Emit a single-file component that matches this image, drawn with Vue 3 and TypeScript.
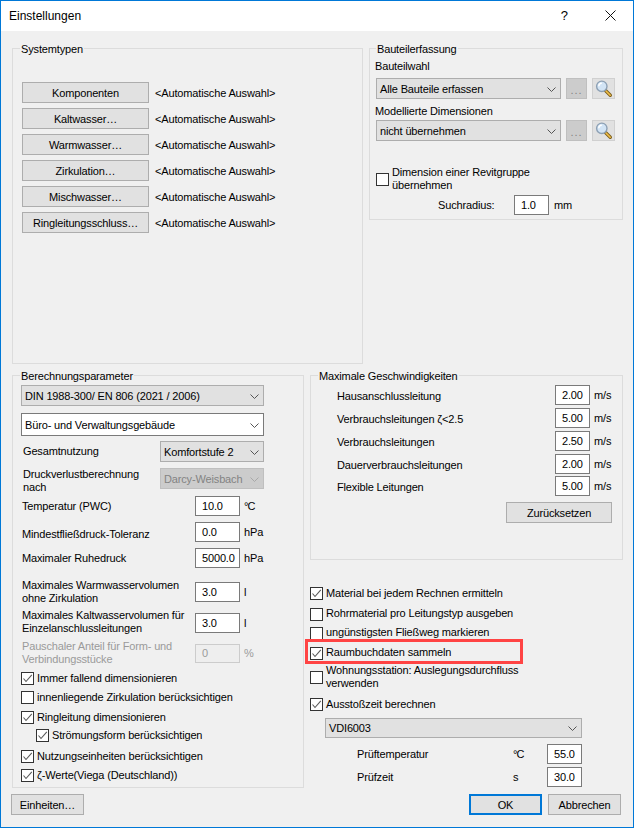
<script setup lang="ts">
const systemTypes: string[] = ['Komponenten', 'Kaltwasser…', 'Warmwasser…', 'Zirkulation…', 'Mischwasser…', 'Ringleitungsschluss…']
const speeds = [
  { label: 'Hausanschlussleitung', value: '2.00', cls: '' },
  { label: 'Verbrauchsleitungen ζ<2.5', value: '5.00', cls: 'mt3' },
  { label: 'Verbrauchsleitungen', value: '2.50', cls: 'mt3' },
  { label: 'Dauerverbrauchsleitungen', value: '2.00', cls: 'mt3' },
  { label: 'Flexible Leitungen', value: '5.00', cls: 'mt2' },
]
const leftChecks = [
  { label: 'Immer fallend dimensionieren', on: true, cls: 'c9' },
  { label: 'innenliegende Zirkulation berücksichtigen', on: false, cls: 'c6' },
  { label: 'Ringleitung dimensionieren', on: true, cls: 'c7' },
  { label: 'Strömungsform berücksichtigen', on: true, cls: 'c5 nested' },
  { label: 'Nutzungseinheiten berücksichtigen', on: true, cls: 'c8' },
  { label: 'ζ-Werte(Viega (Deutschland))', on: true, cls: 'c6' },
]
</script>

<template>
  <div class="window">
    <header class="titlebar">
      <span class="title">Einstellungen</span>
      <span class="help">?</span>
      <svg class="close" width="11" height="11" viewBox="0 0 11 11"><path d="M0.5 0.5L10.5 10.5M10.5 0.5L0.5 10.5" stroke="#111" stroke-width="1" fill="none" /></svg>
    </header>

    <main class="body">
      <section class="row-top">
        <div class="group sys">
          <span class="legend">Systemtypen</span>
          <div v-for="t in systemTypes" :key="t" class="sys-row">
            <div class="btn sys-btn">{{ t }}</div>
            <span class="nudge">&lt;Automatische Auswahl&gt;</span>
          </div>
        </div>

        <div class="group capture">
          <span class="legend left6">Bauteilerfassung</span>
          <div class="lbl first">Bauteilwahl</div>
          <div class="pick-row">
            <div class="combo pick-combo"><span>Alle Bauteile erfassen</span><svg class="chev" width="9" height="5" viewBox="0 0 9 5"><path d="M0.5 0.5L4.5 4.5L8.5 0.5" fill="none" stroke="#555" /></svg></div>
            <div class="dots">...</div>
            <div class="search">
              <svg width="19" height="19" viewBox="0 0 19 19"><path d="M11 11L16.3 16.3" stroke="#7d5f1c" stroke-width="3.4" stroke-linecap="round" /><path d="M12 12L16.2 16.2" stroke="#f2c04a" stroke-width="1.6" stroke-linecap="round" /><circle cx="7.8" cy="7.3" r="5.2" fill="#d2e4f5" stroke="#8da0b4" stroke-width="1.4" /><path d="M4.8 7.3a3 3 0 0 1 3-3" fill="none" stroke="#fff" stroke-width="1.4" /></svg>
            </div>
          </div>
          <div class="lbl second">Modellierte Dimensionen</div>
          <div class="pick-row tight">
            <div class="combo pick-combo"><span>nicht übernehmen</span><svg class="chev" width="9" height="5" viewBox="0 0 9 5"><path d="M0.5 0.5L4.5 4.5L8.5 0.5" fill="none" stroke="#555" /></svg></div>
            <div class="dots">...</div>
            <div class="search">
              <svg width="19" height="19" viewBox="0 0 19 19"><path d="M11 11L16.3 16.3" stroke="#7d5f1c" stroke-width="3.4" stroke-linecap="round" /><path d="M12 12L16.2 16.2" stroke="#f2c04a" stroke-width="1.6" stroke-linecap="round" /><circle cx="7.8" cy="7.3" r="5.2" fill="#d2e4f5" stroke="#8da0b4" stroke-width="1.4" /><path d="M4.8 7.3a3 3 0 0 1 3-3" fill="none" stroke="#fff" stroke-width="1.4" /></svg>
            </div>
          </div>
          <label class="check revit">
            <span class="box"></span>
            <span class="ml">Dimension einer Revitgruppe<br />übernehmen</span>
          </label>
          <div class="radius-row">
            <span class="radius-label">Suchradius:</span>
            <div class="input w35">1.0</div>
            <span class="radius-unit">mm</span>
          </div>
        </div>
      </section>

      <section class="row-bottom">
        <div class="group calc">
          <span class="legend">Berechnungsparameter</span>
          <div class="combo full"><span>DIN 1988-300/ EN 806 (2021 / 2006)</span><svg class="chev" width="9" height="5" viewBox="0 0 9 5"><path d="M0.5 0.5L4.5 4.5L8.5 0.5" fill="none" stroke="#555" /></svg></div>
          <div class="combo full white"><span>Büro- und Verwaltungsgebäude</span><svg class="chev" width="9" height="5" viewBox="0 0 9 5"><path d="M0.5 0.5L4.5 4.5L8.5 0.5" fill="none" stroke="#555" /></svg></div>
          <div class="sel-row s5">
            <span class="sel-label centered">Gesamtnutzung</span>
            <div class="combo small"><span>Komfortstufe 2</span><svg class="chev" width="9" height="5" viewBox="0 0 9 5"><path d="M0.5 0.5L4.5 4.5L8.5 0.5" fill="none" stroke="#555" /></svg></div>
          </div>
          <div class="sel-row s6">
            <span class="sel-label">Druckverlustberechnung<br />nach</span>
            <div class="combo small disabled"><span>Darcy-Weisbach</span><svg class="chev" width="9" height="5" viewBox="0 0 9 5"><path d="M0.5 0.5L4.5 4.5L8.5 0.5" fill="none" stroke="#a8a8a8" /></svg></div>
          </div>
          <div class="param p7"><span class="plabel">Temperatur (PWC)</span><div class="input w45">10.0</div><span class="unit deg">°C</span></div>
          <div class="param p6"><span class="plabel down2">Mindestfließdruck-Toleranz</span><div class="input w45">0.0</div><span class="unit">hPa</span></div>
          <div class="param p6"><span class="plabel">Maximaler Ruhedruck</span><div class="input w45">5000.0</div><span class="unit">hPa</span></div>
          <div class="param p14"><span class="plabel">Maximales Warmwasservolumen<br />ohne Zirkulation</span><div class="input w45">3.0</div><span class="unit">l</span></div>
          <div class="param p11"><span class="plabel up1">Maximales Kaltwasservolumen für<br />Einzelanschlussleitungen</span><div class="input w45">3.0</div><span class="unit">l</span></div>
          <div class="param p11 muted"><span class="plabel up1">Pauschaler Anteil für Form- und<br />Verbindungsstücke</span><div class="input w45 off">0</div><span class="unit">%</span></div>
          <label v-for="c in leftChecks" :key="c.label" class="check" :class="c.cls">
            <span class="box"><svg v-if="c.on" width="11" height="11" viewBox="0 0 11 11"><path d="M1.5 5.5L4 8.5L9.8 1.8" fill="none" stroke="#5a5a5a" stroke-width="1.1" /></svg></span>
            <span>{{ c.label }}</span>
          </label>
        </div>

        <div class="right-col">
          <div class="group speed">
            <span class="legend">Maximale Geschwindigkeiten</span>
            <div v-for="s in speeds" :key="s.label" class="speed-row" :class="s.cls">
              <span class="speed-label"><span class="nudge">{{ s.label }}</span></span>
              <div class="input w35">{{ s.value }}</div>
              <span class="speed-unit">m/s</span>
            </div>
            <div class="btn reset">Zurücksetzen</div>
          </div>

          <label class="check c27"><span class="box"><svg width="11" height="11" viewBox="0 0 11 11"><path d="M1.5 5.5L4 8.5L9.8 1.8" fill="none" stroke="#5a5a5a" stroke-width="1.1" /></svg></span><span>Material bei jedem Rechnen ermitteln</span></label>
          <label class="check c8"><span class="box"></span><span class="lift">Rohrmaterial pro Leitungstyp ausgeben</span></label>
          <label class="check c6"><span class="box"></span><span class="lift">ungünstigsten Fließweg markieren</span></label>
          <label class="check c7 marked"><span class="box"><svg width="11" height="11" viewBox="0 0 11 11"><path d="M1.5 5.5L4 8.5L9.8 1.8" fill="none" stroke="#5a5a5a" stroke-width="1.1" /></svg></span><span class="lift">Raumbuchdaten sammeln</span><span class="highlight"></span></label>
          <label class="check c4"><span class="box"></span><span class="ml">Wohnungsstation: Auslegungsdurchfluss<br />verwenden</span></label>
          <label class="check c8"><span class="box"><svg width="11" height="11" viewBox="0 0 11 11"><path d="M1.5 5.5L4 8.5L9.8 1.8" fill="none" stroke="#5a5a5a" stroke-width="1.1" /></svg></span><span>Ausstoßzeit berechnen</span></label>
          <div class="combo vdi"><span>VDI6003</span><svg class="chev" width="9" height="5" viewBox="0 0 9 5"><path d="M0.5 0.5L4.5 4.5L8.5 0.5" fill="none" stroke="#555" /></svg></div>
          <div class="test-row t6"><span class="test-label">Prüftemperatur</span><span class="test-unit deg">°C</span><div class="input w35">55.0</div></div>
          <div class="test-row t3"><span class="test-label">Prüfzeit</span><span class="test-unit">s</span><div class="input w35">30.0</div></div>
        </div>
      </section>

      <footer class="footer">
        <div class="btn foot-btn">Einheiten…</div>
        <div class="actions">
          <div class="btn foot-btn primary">OK</div>
          <div class="btn foot-btn">Abbrechen</div>
        </div>
      </footer>
    </main>
  </div>
</template>

<style>
html, body { margin: 0; background: #f0f0f0; }
</style>

<style scoped>
.window { width: 634px; height: 828px; box-sizing: border-box; border: 1px solid #0078d7; background: #f0f0f0; color: #000; font: 11px/13px "Liberation Sans", Arial, sans-serif; letter-spacing: -0.15px; overflow: hidden; }
.titlebar { height: 30px; background: #fff; display: flex; align-items: center; position: relative; letter-spacing: 0; }
.title { margin-left: 8px; font-size: 12px; }
.help { margin-left: auto; font-size: 13px; margin-right: 37px; margin-top: -2px; }
.close { margin-right: 17px; margin-top: -2px; }
.body { padding: 0 10px; }
.row-top { display: flex; gap: 6px; align-items: flex-start; margin-top: 17px; margin-left: 1px; }
.row-bottom { display: flex; gap: 6px; align-items: flex-start; margin-top: 11px; margin-left: 1px; }
.group { border: 1px solid #dcdcdc; box-sizing: border-box; position: relative; }
.legend { position: absolute; top: -6px; left: 7px; background: #f0f0f0; padding: 0 1px; white-space: nowrap; }
.left6 { left: 6px; }
.nudge { position: relative; top: 1px; }
.lift { position: relative; top: -1px; }

.sys { width: 351px; height: 316px; padding: 33px 0 0 9px; display: flex; flex-direction: column; gap: 5px; }
.sys-row { display: flex; align-items: center; gap: 6px; height: 21px; }
.btn { background: #e1e1e1; border: 1px solid #adadad; box-sizing: border-box; display: flex; align-items: center; justify-content: center; height: 21px; padding-top: 1px; }
.sys-btn { width: 127px; }

.capture { width: 254px; height: 172px; padding-left: 5px; }
.lbl.first { margin-top: 11px; }
.lbl.second { margin-top: 6px; }
.pick-row { display: flex; margin: 5px 0 0 1px; gap: 5px; }
.pick-row.tight { margin-top: 2px; }
.combo { background: #e1e1e1; border: 1px solid #adadad; box-sizing: border-box; height: 21px; display: flex; align-items: center; justify-content: space-between; padding: 1px 4px 0 3px; white-space: nowrap; }
.chev { flex: none; }
.pick-combo { width: 185px; }
.dots { width: 21px; height: 21px; box-sizing: border-box; background: #ccc; border: 1px solid #bfbfbf; color: #838383; text-align: center; line-height: 23px; letter-spacing: 1px; }
.search { width: 23px; height: 21px; box-sizing: border-box; background: #e1e1e1; border: 1px solid #d0d0d0; display: flex; align-items: center; justify-content: center; }
.check { display: flex; align-items: center; gap: 3px; white-space: nowrap; height: 13px; position: relative; }
.box { width: 13px; height: 13px; box-sizing: border-box; border: 1px solid #333; background: #fff; flex: none; display: flex; }
.revit { height: 26px; margin: 25px 0 0 1px; }
.radius-row { display: flex; align-items: center; margin-top: 3px; padding-left: 63px; }
.radius-label { width: 76px; }
.radius-unit { margin-left: 5px; }
.input { background: #fff; border: 1px solid #7a7a7a; box-sizing: border-box; height: 20px; padding-left: 6px; display: flex; align-items: center; flex: none; }
.w35 { width: 35px; }
.w45 { width: 45px; }

.calc { width: 292px; height: 413px; padding: 9px 0 0 8px; }
.full { width: 243px; }
.full.white { background: #fff; border-color: #7a7a7a; height: 23px; margin-top: 7px; }
.sel-row { display: flex; height: 21px; padding-left: 2px; }
.s5 { margin-top: 5px; }
.s6 { margin-top: 6px; }
.sel-label { width: 137px; white-space: nowrap; }
.sel-label.centered { align-self: center; }
.small { width: 104px; }
.disabled { background: #ccc; border-color: #bfbfbf; color: #838383; }
.param { display: flex; align-items: center; height: 20px; }
.p7 { margin-top: 7px; }
.p6 { margin-top: 6px; }
.p14 { margin-top: 14px; }
.p11 { margin-top: 11px; }
.plabel { width: 173px; margin-left: 1px; white-space: nowrap; }
.down2 { position: relative; top: 2px; }
.up1 { position: relative; top: -1px; }
.unit { margin-left: 4px; }
.deg { letter-spacing: -1px; }
.muted { color: #9a9a9a; height: 19px; }
.off { background: #eee; border-color: #ccc; height: 19px; }
.c4 { margin-top: 4px; height: 26px; }
.c5 { margin-top: 5px; }
.c6 { margin-top: 6px; }
.c7 { margin-top: 7px; }
.c8 { margin-top: 8px; }
.c9 { margin-top: 9px; }
.c27 { margin-top: 27px; }
.nested { margin-left: 15px; }

.right-col { width: 313px; }
.speed { height: 185px; padding: 9px 0 0 26px; }
.speed-row { display: flex; align-items: center; height: 20px; }
.mt3 { margin-top: 3px; }
.mt2 { margin-top: 2px; }
.speed-label { width: 218px; white-space: nowrap; }
.speed-unit { margin-left: 4px; }
.reset { width: 106px; margin: 6px 0 0 169px; }
.highlight { position: absolute; left: -5px; top: -8px; width: 218px; height: 25px; box-sizing: border-box; border: 3px solid #ff4444; pointer-events: none; }
.vdi { width: 257px; height: 20px; margin: 7px 0 0 15px; }
.test-row { display: flex; align-items: center; height: 20px; padding-left: 47px; }
.t6 { margin-top: 6px; }
.t3 { margin-top: 3px; }
.test-label { width: 156px; }
.test-unit { width: 34px; }

.footer { display: flex; justify-content: space-between; margin-top: 6px; padding-right: 2px; }
.actions { display: flex; gap: 6px; }
.foot-btn { width: 73px; }
.primary { border: 2px solid #0078d7; }
</style>
